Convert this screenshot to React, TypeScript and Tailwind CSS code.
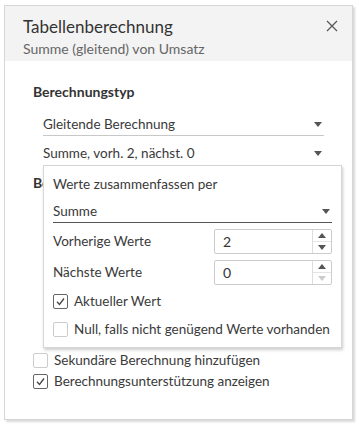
import React from "react";

const Arrow = ({ color = "#555" }: { color?: string }) => (
  <svg width="8" height="5" viewBox="0 0 8 5"><path d="M0 0h8L4 5z" fill={color} /></svg>
);
const Up = ({ color = "#555" }: { color?: string }) => (
  <svg width="8" height="5" viewBox="0 0 8 5"><path d="M0 5h8L4 0z" fill={color} /></svg>
);

const Check = ({ checked }: { checked?: boolean }) => (
  <div className={`w-[15px] h-[15px] rounded-[2px] border flex items-center justify-center shrink-0 ${checked ? "border-[#666]" : "border-[#ccc]"}`}>
    {checked && (
      <svg width="11" height="11" viewBox="0 0 11 11"><path d="M2 5.8l2.5 2.6L9 2.5" fill="none" stroke="#444" strokeWidth="1.3" /></svg>
    )}
  </div>
);

const Spin = ({ value, downDisabled }: { value: string; downDisabled?: boolean }) => (
  <div className="w-[118px] h-[25px] border border-[#ccc] rounded-[2px] flex">
    <div className="flex-1 pl-[8px] flex items-center text-[14px] text-[#333]">{value}</div>
    <div className="w-[19px] border-l border-[#ddd] flex flex-col">
      <div className="flex-1 flex items-center justify-center border-b border-[#e5e5e5]"><Up /></div>
      <div className="flex-1 flex items-center justify-center"><Arrow color={downDisabled ? "#ccc" : "#555"} /></div>
    </div>
  </div>
);

export default function App() {
  return (
    <div className="w-[359px] h-[426px] bg-white pt-[5px] pl-[4px] text-[#3a3a3a]" style={{ fontFamily: "Lato, 'Noto Sans', sans-serif" }}>
      <div className="relative w-[349px] h-[415px] border border-[#d6d6d6] shadow-[2px_2px_2px_rgba(0,0,0,0.15)] bg-white">
        <div className="h-[55px] bg-[#f3f3f3] pl-[18px] pr-[14px] pt-[10px] flex justify-between">
          <div>
            <div className="text-[17px] leading-[22px] text-[#333]">Tabellenberechnung</div>
            <div className="text-[14px] leading-[17px] text-[#666] mt-[2px]">Summe (gleitend) von Umsatz</div>
          </div>
          <svg width="12" height="12" viewBox="0 0 12 12" className="mt-[4px]"><path d="M1 1l10 10M11 1L1 11" stroke="#555" strokeWidth="1.2" /></svg>
        </div>
        <div className="pl-[28px] pr-[28px] text-[13.5px]">
          <div className="mt-[23px] text-[14px] leading-[16px] font-bold text-[#333]">Berechnungstyp</div>
          <div className="ml-[10px] mt-[13px] h-[23px] border-b border-[#c8c8c8] flex items-center justify-between pr-[2px]">
            <span>Gleitende Berechnung</span>
            <Arrow />
          </div>
          <div className="ml-[10px] mt-[6px] h-[23px] flex items-center justify-between pr-[2px]">
            <span>Summe, vorh. 2, nächst. 0</span>
            <Arrow />
          </div>
          <div className="mt-[10px] text-[14px] leading-[16px] font-bold text-[#333]">Berechnen mit</div>
          <div className="h-[162px]" />
          <div className="flex items-center gap-[6px] h-[15px]">
            <Check />
            <span>Sekundäre Berechnung hinzufügen</span>
          </div>
          <div className="flex items-center gap-[6px] h-[15px] mt-[6px]">
            <Check checked />
            <span>Berechnungsunterstützung anzeigen</span>
          </div>
        </div>

        <div className="absolute left-[38px] top-[159px] w-[299px] h-[183px] bg-white border border-[#d6d6d6] shadow-[1px_2px_3px_rgba(0,0,0,0.2)] pl-[9px] pr-[9px] text-[13.5px]">
          <div className="mt-[10px] leading-[16px]">Werte zusammenfassen per</div>
          <div className="mt-[8px] h-[23px] border-b border-[#555] flex items-center justify-between pr-[2px]">
            <span>Summe</span>
            <Arrow />
          </div>
          <div className="mt-[6px] flex items-center justify-between">
            <span>Vorherige Werte</span>
            <Spin value="2" />
          </div>
          <div className="mt-[6px] flex items-center justify-between">
            <span>Nächste Werte</span>
            <Spin value="0" downDisabled />
          </div>
          <div className="mt-[9px] flex items-center gap-[6px] h-[15px]">
            <Check checked />
            <span>Aktueller Wert</span>
          </div>
          <div className="mt-[13px] flex items-center gap-[6px] h-[15px]">
            <Check />
            <span>Null, falls nicht genügend Werte vorhanden</span>
          </div>
        </div>
      </div>
    </div>
  );
}
